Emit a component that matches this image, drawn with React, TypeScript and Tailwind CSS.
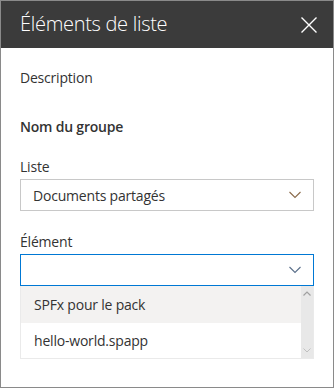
import React from "react";

const font = { fontFamily: '"Segoe UI", "Open Sans", "Noto Sans", sans-serif' };

function Chevron({ color }: { color: string }) {
  return (
    <svg width="12" height="8" viewBox="0 0 12 8" fill="none">
      <path d="M0.5 1 L6 6.5 L11.5 1" stroke={color} strokeWidth="1.1" />
    </svg>
  );
}

export default function App() {
  return (
    <div className="w-[334px] h-[388px] bg-white border border-[#8a8a8a] flex flex-col text-[#333333]" style={font}>
      <div className="h-[47px] bg-[#3b3b3b] flex items-center justify-between pl-[19px] pr-[14px] shrink-0">
        <span className="text-white text-[20px] font-light tracking-[-0.3px] leading-none pb-[2px]">Éléments de liste</span>
        <svg width="18" height="18" viewBox="0 0 18 18" className="mr-[1px]">
          <path d="M1.5 1.5 L16.5 16.5 M16.5 1.5 L1.5 16.5" stroke="#ffffff" strokeWidth="1.4" />
        </svg>
      </div>
      <div className="px-[19px] flex flex-col">
        <div className="text-[14px] mt-[20px] leading-[20px] tracking-[-0.2px]">Description</div>
        <div className="text-[14px] mt-[29px] leading-[20px] font-semibold tracking-[-0.2px]">Nom du groupe</div>
        <div className="text-[14px] mt-[20px] leading-[20px] tracking-[-0.2px]">Liste</div>
        <div className="mt-[2px] h-[32px] border border-[#c8c8c8] flex items-center justify-between pl-[12px] pr-[12px]">
          <span className="text-[14px] tracking-[-0.2px]">Documents partagés</span>
          <Chevron color="#8a6a4a" />
        </div>
        <div className="text-[14px] mt-[21px] leading-[20px] tracking-[-0.2px]">Élément</div>
        <div className="mt-[2px] h-[32px] border border-[#0078d4] flex items-center justify-end pr-[12px]">
          <Chevron color="#5a6f8a" />
        </div>
        <div className="h-[73px] border border-t-0 border-[#eaeaea] flex">
          <div className="flex-1 flex flex-col">
            <div className="h-[37px] bg-[#f3f2f1] flex items-center pl-[13px] text-[14px] tracking-[-0.2px]">SPFx pour le pack</div>
            <div className="h-[35px] flex items-center pl-[13px] text-[14px] tracking-[-0.2px]">hello-world.spapp</div>
          </div>
          <div className="w-[12px] bg-[#e8e8e8] flex flex-col justify-between items-center py-[5px]">
            <svg width="8" height="5" viewBox="0 0 8 5"><path d="M0.5 4.5 L4 1 L7.5 4.5" stroke="#a0a0a0" fill="none" strokeWidth="1.2" /></svg>
            <svg width="8" height="5" viewBox="0 0 8 5"><path d="M0.5 0.5 L4 4 L7.5 0.5" stroke="#c0c0c0" fill="none" strokeWidth="1" /></svg>
          </div>
        </div>
      </div>
    </div>
  );
}
